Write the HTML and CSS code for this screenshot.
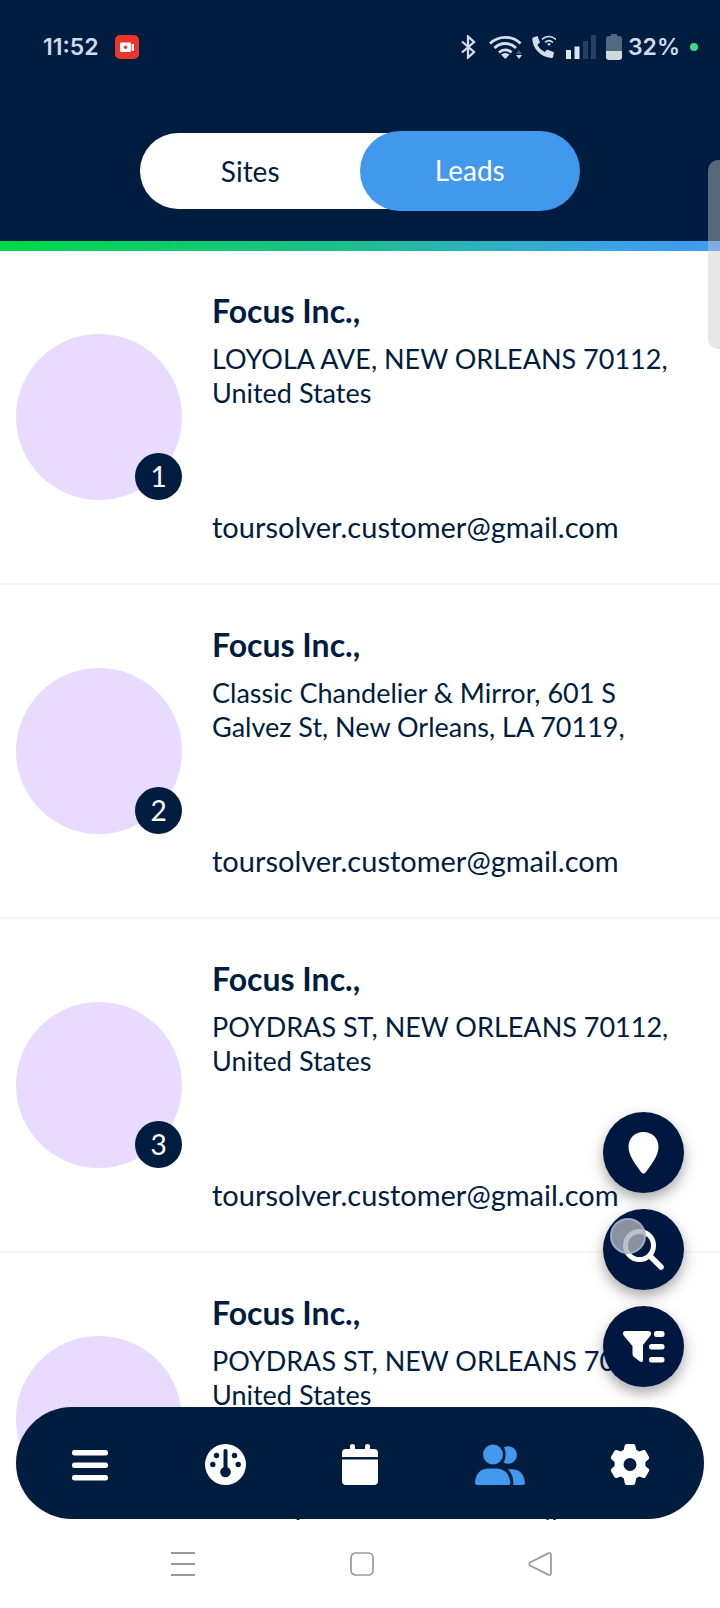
FILE: index.html
```html
<!DOCTYPE html>
<html lang="en">
<head>
<meta charset="utf-8">
<meta name="viewport" content="width=device-width, initial-scale=1">
<title>Leads</title>
<link rel="stylesheet" href="styles.css">
</head>
<body>
<div class="app">
  <header class="header">
    <div class="status">
      <span class="clock">11:52</span>
      <svg class="recorder" width="24" height="24" viewBox="0 0 24 24" aria-hidden="true"><rect width="24" height="24" rx="5" fill="#ea352c"/><rect x="5" y="7.500" width="11" height="9.500" rx="1" fill="#fff"/><path d="M16 10l1-1h2v7h-2l-1-1z" fill="#fff"/><path d="M16.300 9v7" stroke="#ea352c" stroke-width=".7"/><circle cx="10.500" cy="12.300" r="1.700" fill="#ea352c"/></svg>
      <div class="indicators">
        <svg width="18" height="24" viewBox="0 0 18 24" aria-hidden="true"><path d="M1 6.500L13 17l-6 5.500V1.500L13 7 1 17.500" fill="none" stroke="#d3dded" stroke-width="2.300"/></svg>
        <svg width="33" height="24" viewBox="0 0 33 24" fill="none" aria-hidden="true"><path d="M1 8.500c8.500-8.300 22-8.300 30.500 0M5.500 13c6-6 15.500-6 21.500 0M10 17.500c3.500-3.500 9-3.500 12.500 0" stroke="#d3dded" stroke-width="2.800"/><path d="M12 19.500q4.300-3 8.500 0L16.300 24z" fill="#d3dded"/><path d="M27 19l3-4 3 4z" fill="#4a5c76"/><path d="M27 20h6l-3 4z" fill="#d3dded"/></svg>
        <svg width="24" height="24" viewBox="0 0 24 24" fill="none" aria-hidden="true"><path d="M1 2.500L5.500 1 8 7.500 5.500 9.800c1.300 3 4 5.700 7.200 7.200l2.500-2.500 6.800 2.800-.8 4.200c-.2 1-1 1.500-2 1.500C8.500 22 .500 13 .300 4c0-.8.200-1.200.7-1.500z" fill="#d3dded"/><path d="M10 4.500c4-4 10-4 14 0M13 7.500c2.500-2.300 5.500-2.300 8 0" stroke="#d3dded" stroke-width="1.500"/><path d="M15 8.800q2-1.300 4 0l-2 2.200z" fill="#d3dded"/></svg>
        <svg width="30" height="24" viewBox="0 0 30 24" aria-hidden="true"><path d="M0 15h5v9H0zM8.500 11.500h5V24h-5z" fill="#dbe4f0"/><path d="M17 6h5v18h-5zM25 0h5v24h-5z" fill="#26405f"/></svg>
        <div class="battery">
          <svg width="16" height="26" viewBox="0 0 16 26" aria-hidden="true"><path d="M5 0h6v2h2a3 3 0 0 1 3 3v12H0V5a3 3 0 0 1 3-3h2z" fill="#526a80"/><path d="M0 17h16v6a3 3 0 0 1-3 3H3a3 3 0 0 1-3-3z" fill="#cfdadf"/></svg>
          <span>32%</span>
        </div>
        <span class="live-dot"></span>
      </div>
    </div>
    <div class="toggle" role="tablist">
      <button class="tab" type="button" role="tab" aria-selected="false">Sites</button>
      <button class="tab tab-active" type="button" role="tab" aria-selected="true">Leads</button>
    </div>
  </header>

  <main class="content">
    <ul class="leads">
      <li class="lead">
        <div class="avatar"><span class="badge">1</span></div>
        <div class="details">
          <h2 class="name">Focus Inc.,</h2>
          <p class="address">LOYOLA AVE, NEW ORLEANS 70112,<br>United States</p>
          <a class="email" href="mailto:toursolver.customer@gmail.com">toursolver.customer@gmail.com</a>
        </div>
      </li>
      <li class="lead">
        <div class="avatar"><span class="badge">2</span></div>
        <div class="details">
          <h2 class="name">Focus Inc.,</h2>
          <p class="address">Classic Chandelier &amp; Mirror, 601 S<br>Galvez St, New Orleans, LA 70119,</p>
          <a class="email" href="mailto:toursolver.customer@gmail.com">toursolver.customer@gmail.com</a>
        </div>
      </li>
      <li class="lead">
        <div class="avatar"><span class="badge">3</span></div>
        <div class="details">
          <h2 class="name">Focus Inc.,</h2>
          <p class="address">POYDRAS ST, NEW ORLEANS 70112,<br>United States</p>
          <a class="email" href="mailto:toursolver.customer@gmail.com">toursolver.customer@gmail.com</a>
        </div>
      </li>
      <li class="lead">
        <div class="avatar"><span class="badge">4</span></div>
        <div class="details">
          <h2 class="name">Focus Inc.,</h2>
          <p class="address">POYDRAS ST, NEW ORLEANS 70112,<br>United States</p>
          <a class="email" href="mailto:toursolver.customer@gmail.com">toursolver.customer@gmail.com</a>
        </div>
      </li>
    </ul>

    <div class="actions">
      <button class="action" type="button" aria-label="Map"><svg width="31" height="42" viewBox="0 0 31 42"><path d="M15.500 0C6.500 0 .500 6.500.500 15c0 9 8 18.500 12.800 25.300q2.200 2.800 4.400 0C22.500 33.500 30.500 24 30.500 15c0-8.500-6-15-15-15z" fill="#fff"/></svg></button>
      <button class="action" type="button" aria-label="Search"><svg width="41" height="41" viewBox="0 0 41 41" fill="none" stroke="#fff"><circle cx="16.500" cy="16.500" r="14" stroke-width="5"/><path d="M27 27l11 11" stroke-width="5.500" stroke-linecap="round"/></svg><span class="touch"></span></button>
      <button class="action" type="button" aria-label="Filter"><svg width="42" height="32" viewBox="0 0 42 32" fill="#fff"><path d="M2 0h24q3.500 1 1.500 4.500L20 14v15.500q-.5 2.500-3 1l-6-4.500q-1.500-1-1.500-3v-8L1 5Q-1.500 1 2 0z"/><rect x="31" y="0" width="10.500" height="6" rx="2.500"/><rect x="26" y="13" width="15.500" height="5.500" rx="2.500"/><rect x="26" y="26" width="15.500" height="5.500" rx="2.500"/></svg></button>
    </div>

    <nav class="nav" aria-label="Main">
      <button class="nav-item" type="button" aria-label="Menu"><svg width="36" height="32" viewBox="0 0 36 32" fill="#fff"><rect y="1" width="36" height="5.500" rx="2.500"/><rect y="13.500" width="36" height="5.500" rx="2.500"/><rect y="26" width="36" height="5.500" rx="2.500"/></svg></button>
      <button class="nav-item" type="button" aria-label="Dashboard"><svg width="41" height="41" viewBox="0 0 41 41"><circle cx="20.500" cy="20.500" r="20.500" fill="#fff"/><g fill="#001d40"><circle cx="20.500" cy="28" r="5.300"/><rect x="18.500" y="5" width="4" height="22" rx="2"/><circle cx="11.500" cy="11.500" r="2.700"/><circle cx="29.500" cy="11.500" r="2.700"/><circle cx="7.800" cy="20.500" r="2.700"/><circle cx="33.200" cy="20.500" r="2.700"/></g></svg></button>
      <button class="nav-item" type="button" aria-label="Calendar"><svg width="36" height="41" viewBox="0 0 36 41" fill="#fff"><path d="M0 13V9q0-4 4-4h4V2q0-2 2.500-2T13 2v3h10V2q0-2 2.500-2T28 2v3h4q4 0 4 4v4zM0 15.500h36V37q0 4-4 4H4q-4 0-4-4z"/></svg></button>
      <button class="nav-item" type="button" aria-label="Leads" aria-current="page"><svg width="60" height="41" viewBox="-10 0 60 41" fill="#4298ec"><circle cx="18" cy="10.500" r="10"/><path d="M29 3.200A8.800 8.800 0 1 1 28.500 18.500C31 14 31.500 8 29 3.200z"/><path d="M0 39q1-14.500 14-14.500h8q12 1 13.500 14.500 0 2-2 2H2q-2 0-2-2zM33 25.500c9.500-1.500 16 2.500 17 13.500q0 2-2 2H38c1-5-.5-11.500-5-15.500z"/></svg></button>
      <button class="nav-item" type="button" aria-label="Settings"><svg width="40" height="41" viewBox="0 0 40 41"><path fill="#fff" fill-rule="evenodd" d="M16.500 0h7q1.500 0 1.800 1.500l.9 4.300 3 1.700 4.200-1.400q1.400-.4 2.200.9l3.300 5.800q.8 1.300-.3 2.400l-3.200 2.900v3.800l3.200 2.900q1.100 1 .3 2.400L35.600 33q-.8 1.300-2.200.9l-4.200-1.400-3 1.700-.9 4.800Q25 41 23.500 41h-7q-1.500 0-1.800-1.900l-.9-4.900-3-1.700-4.200 1.400q-1.400.4-2.200-.9l-3.300-5.800q-.8-1.400.3-2.400l3.200-2.900v-3.800l-3.200-2.900Q.300 14.100 1.100 12.800L4.400 7q.8-1.300 2.200-.9l4.200 1.400 3-1.700.9-4.300Q15 0 16.500 0zM20 14a6.500 6.500 0 1 0 0 13 6.500 6.500 0 0 0 0-13z"/></svg></button>
    </nav>
  </main>

  <footer class="system">
    <button class="system-key" type="button" aria-label="Recent apps"><svg width="24" height="24" viewBox="0 0 24 24" stroke="#999" stroke-width="2" fill="none"><path d="M0 1h24M0 12h24M0 23h24"/></svg></button>
    <button class="system-key" type="button" aria-label="Home"><svg width="24" height="24" viewBox="0 0 24 24" stroke="#999" stroke-width="1.700" fill="none"><rect x="1" y="1" width="22" height="22" rx="4.500"/></svg></button>
    <button class="system-key" type="button" aria-label="Back"><svg width="24" height="24" viewBox="0 0 24 24" stroke="#999" stroke-width="1.700" fill="none"><path d="M2 10.500L20 1.400q3-1 3 1.600v18q0 2.600-3 1.600L2 13.500q-1.500-1.500 0-3z"/></svg></button>
  </footer>
  <div class="edge-handle"></div>
</div>
</body>
</html>
```
FILE: styles.css
```css
* {
  box-sizing: border-box;
}

body {
  margin: 0;
  color: #001d40;
  background: #fff;
  font-family: Lato, "Open Sans", sans-serif;
  font-size: 28px;
  line-height: 34px;
}

button {
  margin: 0;
  padding: 0;
  border: 0;
  background: none;
  color: inherit;
  font: inherit;
  cursor: pointer;
}

svg {
  display: block;
  flex: none;
}

.app {
  position: relative;
  display: flex;
  flex-direction: column;
  height: 100vh;
  overflow: hidden;
}

/* Header */
.header {
  flex: none;
  padding-bottom: 30px;
  background: #001d40;
  border-bottom: 10px solid;
  border-image: linear-gradient(90deg, #00d84a, #1fc08e 48%, #3ba3e8 85%, #429aee) 1;
}

.status {
  display: flex;
  align-items: center;
  height: 94px;
  margin-bottom: 37px;
  padding: 0 22px 0 43px;
  color: #cfdbeb;
  font-family: Inter, Roboto, sans-serif;
  font-size: 23px;
  font-weight: 600;
}

.recorder {
  margin-left: 16px;
}

.indicators {
  display: flex;
  align-items: center;
  gap: 10px;
  margin-left: auto;
}

.battery {
  display: flex;
  align-items: center;
  gap: 6px;
}

.live-dot {
  width: 8px;
  height: 8px;
  border-radius: 50%;
  background: #45d880;
}

.toggle {
  display: flex;
  align-items: center;
  width: 61%;
  margin: 0 auto;
}

/* The white pill continues behind the rounded edge of the active tab. */
.tab {
  flex: 1;
  height: 76px;
  border-radius: 38px 0 0 38px;
  background: #fff;
  box-shadow: 40px 0 0 #fff;
}

.tab-active {
  position: relative;
  height: 80px;
  padding-bottom: 2px;
  border-radius: 40px;
  background: #4298ec;
  box-shadow: none;
  color: #fff;
}

/* Lead list */
.content {
  position: relative;
  flex: 1;
  min-height: 0;
  overflow: hidden;
}

.leads {
  margin: 0;
  padding: 0;
  list-style: none;
}

.lead {
  display: flex;
  align-items: center;
  gap: 30px;
  padding: 38px 16px 39px;
  border-bottom: 2px solid #f6f6f6;
}

.avatar {
  display: flex;
  flex: none;
  align-items: flex-end;
  justify-content: flex-end;
  width: 166px;
  height: 166px;
  border-radius: 50%;
  background: #e9dbff;
}

.badge {
  width: 47px;
  height: 47px;
  border-radius: 50%;
  background: #001d40;
  color: #fff;
  line-height: 46px;
  text-align: center;
}

.details {
  flex: 1;
  min-width: 0;
  padding-top: 2px;
}

.name {
  margin: 0 0 11px;
  font-size: 32px;
  font-weight: 700;
  line-height: 40px;
}

.address {
  height: 168px;
  margin: 0;
  font-size: 27px;
  white-space: nowrap;
}

.email {
  display: block;
  color: inherit;
  font-size: 29px;
  text-decoration: none;
}

/* Floating actions */
.actions {
  position: absolute;
  right: 36px;
  bottom: 133px;
  display: flex;
  flex-direction: column;
  gap: 16px;
}

.action {
  position: relative;
  display: flex;
  align-items: center;
  justify-content: center;
  width: 81px;
  height: 81px;
  border-radius: 50%;
  background: #001840;
  box-shadow: 0 6px 14px rgba(0, 0, 0, 0.35);
}

.touch {
  position: absolute;
  top: 9px;
  left: 7px;
  width: 36px;
  height: 36px;
  border: 2px solid rgba(170, 185, 220, 0.7);
  border-radius: 50%;
  background: rgba(172, 176, 184, 0.8);
}

/* Bottom navigation */
.nav {
  position: absolute;
  right: 16px;
  bottom: 1px;
  left: 16px;
  display: flex;
  height: 112px;
  padding: 3px 7px 0;
  border-radius: 56px;
  background: #001d40;
}

.nav-item {
  display: flex;
  flex: 1;
  align-items: center;
  justify-content: center;
}

/* System keys */
.system {
  display: flex;
  flex: none;
  justify-content: space-between;
  height: 88px;
  padding: 0 168px 0 171px;
  background: #fff;
}

.system-key {
  display: flex;
  align-items: center;
}

.edge-handle {
  position: absolute;
  top: 160px;
  right: 0;
  width: 12px;
  height: 189px;
  border-radius: 10px 0 0 10px;
  background: rgba(200, 200, 200, 0.44);
}
```
